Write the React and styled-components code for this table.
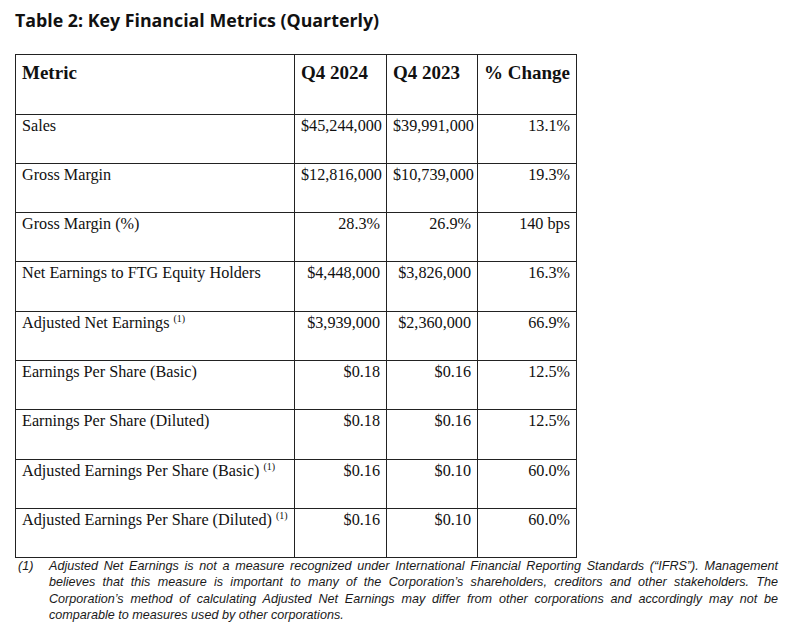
import React from 'react';
import styled, { createGlobalStyle } from 'styled-components';

const GlobalStyle = createGlobalStyle`
  body {
    margin: 0;
    background: #ffffff;
    color: #111111;
  }
`;

const Page = styled.div`
  width: 792px;
  height: 626px;
  padding: 8px 14px 0 15px;
  box-sizing: border-box;
  overflow: hidden;
`;

const Title = styled.h1`
  margin: 0 0 22px 0;
  font-family: "Open Sans", sans-serif;
  font-weight: 700;
  font-size: 17.8px;
  line-height: 24px;
  color: #111111;
`;

const Table = styled.table`
  border-collapse: collapse;
  table-layout: fixed;
  width: 561px;
  font-family: "Liberation Serif", "Times New Roman", serif;
  color: #111111;
`;

const HeadCell = styled.th`
  height: 51.5px;
  padding: 7px 6px 0 6px;
  border: 1.5px solid #222222;
  vertical-align: top;
  text-align: left;
  font-size: 19px;
  font-weight: 700;
  line-height: 22px;
  white-space: nowrap;
`;

const Cell = styled.td`
  height: 49.3px;
  padding: 1px 6px 0 6px;
  border: 1.5px solid #222222;
  vertical-align: top;
  text-align: ${(p) => (p.$num ? 'right' : 'left')};
  font-size: 16.2px;
  line-height: 20px;
  white-space: nowrap;
  box-sizing: border-box;
`;

const Sup = styled.sup`
  font-size: 10px;
  line-height: 0;
  vertical-align: 6px;
`;

const Footnote = styled.div`
  display: flex;
  width: 763px;
  margin-top: 0;
  font-family: "Liberation Sans", Arial, sans-serif;
  font-style: italic;
  font-size: 12.6px;
  line-height: 16.3px;
  color: #1a1a1a;
`;

const NoteMark = styled.span`
  flex: 0 0 31px;
  padding-left: 3px;
`;

const NoteText = styled.p`
  margin: 0;
  flex: 1;
  text-align: justify;
`;

const rows = [
  { metric: 'Sales', q24: '$45,244,000', q23: '$39,991,000', chg: '13.1%' },
  { metric: 'Gross Margin', q24: '$12,816,000', q23: '$10,739,000', chg: '19.3%' },
  { metric: 'Gross Margin (%)', q24: '28.3%', q23: '26.9%', chg: '140 bps' },
  { metric: 'Net Earnings to FTG Equity Holders', q24: '$4,448,000', q23: '$3,826,000', chg: '16.3%' },
  { metric: 'Adjusted Net Earnings', note: true, q24: '$3,939,000', q23: '$2,360,000', chg: '66.9%' },
  { metric: 'Earnings Per Share (Basic)', q24: '$0.18', q23: '$0.16', chg: '12.5%' },
  { metric: 'Earnings Per Share (Diluted)', q24: '$0.18', q23: '$0.16', chg: '12.5%' },
  { metric: 'Adjusted Earnings Per Share (Basic)', note: true, q24: '$0.16', q23: '$0.10', chg: '60.0%' },
  { metric: 'Adjusted Earnings Per Share (Diluted)', note: true, q24: '$0.16', q23: '$0.10', chg: '60.0%' },
];

const App = () => {
  return (
    <Page>
      <GlobalStyle />
      <Title>Table 2: Key Financial Metrics (Quarterly)</Title>
      <Table>
        <colgroup>
          <col style={{ width: 279 }} />
          <col style={{ width: 92 }} />
          <col style={{ width: 91 }} />
          <col style={{ width: 99 }} />
        </colgroup>
        <thead>
          <tr>
            <HeadCell>Metric</HeadCell>
            <HeadCell>Q4 2024</HeadCell>
            <HeadCell>Q4 2023</HeadCell>
            <HeadCell>% Change</HeadCell>
          </tr>
        </thead>
        <tbody>
          {rows.map((r) => (
            <tr key={r.metric}>
              <Cell>
                {r.metric}
                {r.note && <> <Sup>(1)</Sup></>}
              </Cell>
              <Cell $num>{r.q24}</Cell>
              <Cell $num>{r.q23}</Cell>
              <Cell $num>{r.chg}</Cell>
            </tr>
          ))}
        </tbody>
      </Table>
      <Footnote>
        <NoteMark>(1)</NoteMark>
        <NoteText>
          Adjusted Net Earnings is not a measure recognized under International Financial
          Reporting Standards (“IFRS”). Management believes that this measure is important to
          many of the Corporation’s shareholders, creditors and other stakeholders. The
          Corporation’s method of calculating Adjusted Net Earnings may differ from other
          corporations and accordingly may not be comparable to measures used by other
          corporations.
        </NoteText>
      </Footnote>
    </Page>
  );
};

export default App;
